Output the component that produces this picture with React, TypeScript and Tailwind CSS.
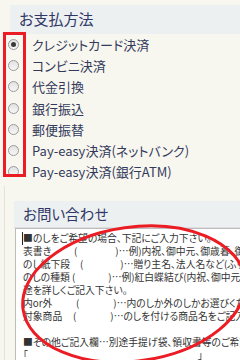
import React from "react";

const methods = [
  { label: "クレジットカード決済", checked: true },
  { label: "コンビニ決済", checked: false },
  { label: "代金引換", checked: false },
  { label: "銀行振込", checked: false },
  { label: "郵便振替", checked: false },
  { label: "Pay-easy決済(ネットバンク)", checked: false },
  { label: "Pay-easy決済(銀行ATM)", checked: false },
];

function Radio({ checked }: { checked: boolean }) {
  return (
    <span className="flex h-[11px] w-[11px] shrink-0 items-center justify-center rounded-full border border-[#9a9a9a] bg-gradient-to-b from-[#e2e2e2] to-[#f7f7f7]">
      {checked && <span className="h-[5px] w-[5px] rounded-full bg-[#3a3a3a]" />}
    </span>
  );
}

function FieldRow({
  label,
  labelW,
  innerW,
  rest,
}: {
  label: string;
  labelW: string;
  innerW: string;
  rest: string;
}) {
  return (
    <div className="whitespace-nowrap">
      <span className={`inline-block ${labelW}`}>{label}</span>(
      <span className={`inline-block ${innerW}`} />
      ){rest}
    </div>
  );
}

export default function App() {
  return (
    <div className="relative h-[360px] w-[240px] overflow-hidden bg-[#f8f7ef] font-['Noto_Sans_CJK_JP',sans-serif] [font-feature-settings:'palt']">
      {/* payment methods */}
      <div className="pl-[10px] pt-[5px]">
        <div className="flex h-[29px] items-center bg-[#edf0f1] pl-[9px] text-[15px] text-[#2f3766]">
          お支払方法
        </div>
      </div>
      <div className="pl-[8px]">
        {methods.map((m) => (
          <div key={m.label} className="flex h-[21.2px] items-center">
            <Radio checked={m.checked} />
            <span className="ml-[13px] text-[13px] leading-none text-[#333a5c]">{m.label}</span>
          </div>
        ))}
      </div>

      {/* inquiry */}
      <div className="ml-[4px] mt-[4px] h-[200px] border-l border-[#e3e2da] pl-[9px] pt-[15px]">
        <div className="flex h-[27px] items-center border-b border-[#dcdedf] bg-[#edf0f1] pl-[9px] text-[14.5px] text-[#2f3766]">
          お問い合わせ
        </div>
        <div className="ml-[1px] h-[200px] overflow-hidden border-l border-t border-[#bdbdbd] bg-white pl-[7px] pt-[3px] text-[9.8px] leading-[13px] text-[#333]">
          <div className="relative whitespace-nowrap">
            <span className="absolute left-[-1px] top-[0px] h-[13px] w-px bg-[#222]" />
            ■のしをご希望の場合、下記にご入力下さい。
          </div>
          <FieldRow label="表書き" labelW="w-[51px]" innerW="w-[38px]" rest="…例)内祝、御中元、御歳暮、御年賀" />
          <FieldRow label="のし紙下段" labelW="w-[57px]" innerW="w-[37px]" rest="…贈り主名、法人名など(ふりがな)" />
          <FieldRow label="のしの種類" labelW="w-[49px]" innerW="w-[33px]" rest="…例)紅白蝶結び(内祝、御中元、御歳暮)など用" />
          <div className="whitespace-nowrap">途を詳しくご記入下さい。</div>
          <FieldRow label="内or外" labelW="w-[53px]" innerW="w-[34px]" rest="…内のしか外のしかお選びください" />
          <FieldRow label="対象商品" labelW="w-[50px]" innerW="w-[34px]" rest="…のしを付ける商品名をご記入ください" />
          <div className="h-[13px]" />
          <div className="whitespace-nowrap">■その他ご記入欄…別途手提げ袋、領収書等のご希望がございましたら</div>
          <div className="whitespace-nowrap">
            「<span className="inline-block w-[170px]" />」
          </div>
        </div>
      </div>

      {/* annotations */}
      <div className="absolute left-[3px] top-[32px] h-[145px] w-[23px] border-[3px] border-[#ec1c24]" />
      <svg className="absolute left-0 top-0" width="240" height="360" viewBox="0 0 240 360">
        <ellipse
          cx="134"
          cy="294"
          rx="112"
          ry="67"
          transform="rotate(-8 134 294)"
          fill="none"
          stroke="#ec1c24"
          strokeWidth="3"
        />
      </svg>
    </div>
  );
}
